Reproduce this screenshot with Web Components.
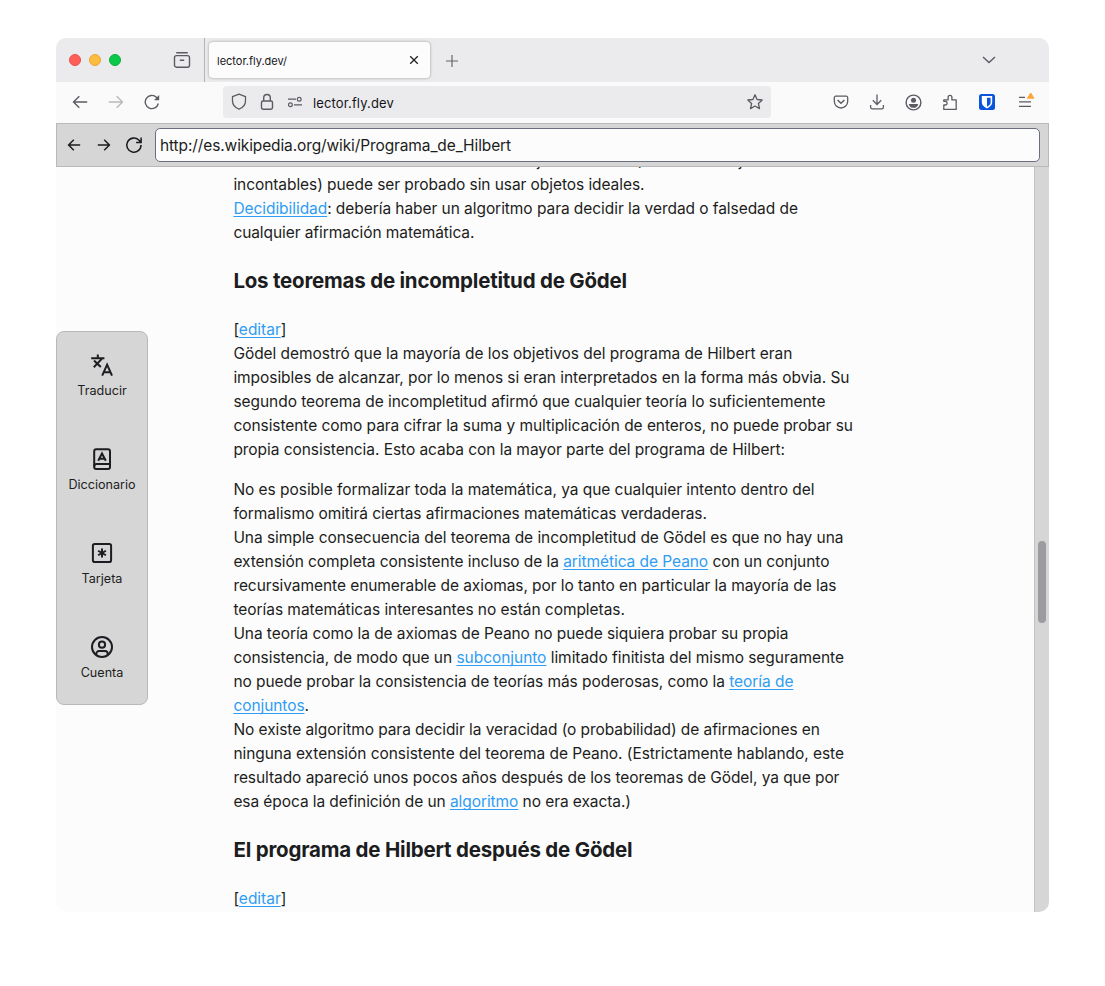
<!DOCTYPE html>
<html lang="es">
<head>
<meta charset="utf-8">
<title>lector.fly.dev</title>
<style>
html,body{margin:0;height:100%;background:#fff}
body{font-family:Inter,"Liberation Sans",sans-serif;color:#1c1d21;box-sizing:border-box;padding:38px 56px 74px;height:986px;overflow:hidden}
</style>
</head>
<body>
<browser-window>
  <tab-strip slot="tabs"></tab-strip>
  <nav-bar slot="nav"></nav-bar>
  <reader-bar slot="reader"></reader-bar>
  <reader-page slot="page">
    <side-menu slot="menu">
      <menu-item icon="translate">Traducir</menu-item>
      <menu-item icon="book">Diccionario</menu-item>
      <menu-item icon="card">Tarjeta</menu-item>
      <menu-item icon="user">Cuenta</menu-item>
    </side-menu>
    <text-line w="551">obtenido usando razonamiento sobre objetos ideales (tal como conjuntos</text-line>
    <text-line w="411">incontables) puede ser probado sin usar objetos ideales.</text-line>
    <text-line w="564.5"><wiki-link>Decidibilidad</wiki-link>: debería haber un algoritmo para decidir la verdad o falsedad de</text-line>
    <text-line w="241">cualquier afirmación matemática.</text-line>
    <section-title w="393.5">Los teoremas de incompletitud de Gödel</section-title>
    <text-line w="53">[<wiki-link>editar</wiki-link>]</text-line>
    <text-line w="559">Gödel demostró que la mayoría de los objetivos del programa de Hilbert eran</text-line>
    <text-line w="616">imposibles de alcanzar, por lo menos si eran interpretados en la forma más obvia. Su</text-line>
    <text-line w="592">segundo teorema de incompletitud afirmó que cualquier teoría lo suficientemente</text-line>
    <text-line w="619.5">consistente como para cifrar la suma y multiplicación de enteros, no puede probar su</text-line>
    <text-line w="551.5">propia consistencia. Esto acaba con la mayor parte del programa de Hilbert:</text-line>
    <text-line class="gap" w="581">No es posible formalizar toda la matemática, ya que cualquier intento dentro del</text-line>
    <text-line w="473.5">formalismo omitirá ciertas afirmaciones matemáticas verdaderas.</text-line>
    <text-line w="610">Una simple consecuencia del teorema de incompletitud de Gödel es que no hay una</text-line>
    <text-line w="596">extensión completa consistente incluso de la <wiki-link>aritmética de Peano</wiki-link> con un conjunto</text-line>
    <text-line w="603">recursivamente enumerable de axiomas, por lo tanto en particular la mayoría de las</text-line>
    <text-line w="391.5">teorías matemáticas interesantes no están completas.</text-line>
    <text-line w="555">Una teoría como la de axiomas de Peano no puede siquiera probar su propia</text-line>
    <text-line w="610.5">consistencia, de modo que un <wiki-link>subconjunto</wiki-link> limitado finitista del mismo seguramente</text-line>
    <text-line w="560">no puede probar la consistencia de teorías más poderosas, como la <wiki-link>teoría de</wiki-link></text-line>
    <text-line w="75.5"><wiki-link>conjuntos</wiki-link>.</text-line>
    <text-line w="586.5">No existe algoritmo para decidir la veracidad (o probabilidad) de afirmaciones en</text-line>
    <text-line w="610.5">ninguna extensión consistente del teorema de Peano. (Estrictamente hablando, este</text-line>
    <text-line w="606">resultado apareció unos pocos años después de los teoremas de Gödel, ya que por</text-line>
    <text-line w="397.5">esa época la definición de un <wiki-link>algoritmo</wiki-link> no era exacta.)</text-line>
    <section-title w="399">El programa de Hilbert después de Gödel</section-title>
    <text-line w="53">[<wiki-link>editar</wiki-link>]</text-line>
  </reader-page>
</browser-window>
<script>
const ICONS = {
  recent:[18,18,'<g fill="none" stroke="#5b5b66" stroke-width="1.4"><path d="M3.2 1.7H14.8"/><rect x="1.5" y="4.6" width="15" height="11.6" rx="2"/><path d="M6.8 9.3h4.4"/></g>'],
  close:[10,10,'<path d="M1.2 1.2l7.6 7.6M8.8 1.2L1.2 8.8" stroke="#222" stroke-width="1.3"/>'],
  plus:[12,12,'<path d="M6 0v12M0 6h12" stroke="#66666c" stroke-width="1.2"/>'],
  down:[14,8,'<path d="M1 1l6 5.6L13 1" fill="none" stroke="#5b5b66" stroke-width="1.4"/>'],
  back:[16,14,'<path d="M15.2 7H1.5M7.3 1.2L1.5 7l5.8 5.8" fill="none" stroke="#5b5b62" stroke-width="1.4"/>'],
  fwd:[16,14,'<path d="M.8 7h13.7M8.7 1.2L14.5 7l-5.8 5.8" fill="none" stroke="#b9b9bc" stroke-width="1.4"/>'],
  reload:[16,16,'<path d="M14.3 9.5A6.6 6.6 0 1 1 12.4 3.2L14 4.7" fill="none" stroke="#5b5b62" stroke-width="1.4"/><path d="M15.2 1v5.2H10z" fill="#5b5b62"/>'],
  shield:[16,18,'<path d="M8 1.2L14.5 3.7V8c0 4-2.6 6.6-6.5 8.2C4.1 14.6 1.5 12 1.5 8V3.7z" fill="none" stroke="#5b5b62" stroke-width="1.3" stroke-linejoin="round"/>'],
  lock:[14,18,'<g fill="none" stroke="#5b5b62" stroke-width="1.4"><rect x="1.5" y="8" width="11" height="8.2" rx="1.6"/><path d="M3.7 8V4.8a3.3 3.3 0 0 1 6.6 0V8"/></g>'],
  perms:[16,12,'<g fill="none" stroke="#5b5b62" stroke-width="1.2"><path d="M1 3.2h8M7 8.8h8"/><circle cx="12.2" cy="3.2" r="1.9"/><circle cx="3.4" cy="8.8" r="1.9"/></g>'],
  star:[18,18,'<path d="M9 1.8l2.1 4.7 5.1.5-3.8 3.5 1.1 5.1L9 13l-4.5 2.6 1.1-5.1L1.8 7l5.1-.5z" fill="none" stroke="#5b5b62" stroke-width="1.3" stroke-linejoin="round"/>'],
  pocket:[16,16,'<g fill="none" stroke="#5b5b62" stroke-width="1.3"><path d="M2.8 2.2h10.4a1.5 1.5 0 0 1 1.5 1.5v3.6a6.7 6.7 0 0 1-13.4 0V3.7a1.5 1.5 0 0 1 1.5-1.5z"/><path d="M4.6 6L8 9.2 11.4 6" stroke-width="1.5"/></g>'],
  download:[16,16,'<g fill="none" stroke="#5b5b62" stroke-width="1.3"><path d="M8 .5v9.8M3.8 6.3L8 10.5l4.2-4.2M1.6 11v2.3a1.6 1.6 0 0 0 1.6 1.6h9.6a1.6 1.6 0 0 0 1.6-1.6V11"/></g>'],
  account:[17,17,'<circle cx="8.5" cy="8.5" r="7.4" fill="none" stroke="#5b5b62" stroke-width="1.4"/><circle cx="8.5" cy="6.3" r="2.5" fill="#5b5b62"/><path d="M3.9 9.9h9.2c0 2.4-2 3.9-4.6 3.9s-4.6-1.5-4.6-3.9z" fill="#5b5b62"/>'],
  puzzle:[16,17,'<path d="M1.8 15.4V11h1.5a1.8 1.8 0 0 0 0-3.6H1.8V5.9h4.3V3.3a1.9 1.9 0 0 1 3.8 0v2.6h4.3v9.5z" fill="none" stroke="#5b5b62" stroke-width="1.3" stroke-linejoin="round"/>'],
  vault:[16,16,'<rect width="16" height="16" rx="2.5" fill="#0b55dc"/><path d="M2.8 2h10.4v6.6c0 2.6-2.2 4.4-5.2 5.9-3-1.5-5.2-3.3-5.2-5.9z" fill="#fff"/><path d="M8 3.7h3.6v4.9c0 1.7-1.3 2.8-3.6 4.1z" fill="#0b55dc"/>'],
  menu:[20,20,'<path d="M3 5.400h6M3 9.800h12M3 14.300h12" stroke="#5b5b62" stroke-width="1.3"/><path d="M14.700 1L17.900 6.200H11.500z" fill="#ffa436" stroke="#ffa436" stroke-width="1" stroke-linejoin="round"/>'],
  rback:[14,14,'<path d="M13.200 7H1.800M6.800 1.800L1.600 7l5.200 5.200" fill="none" stroke="#1c1d21" stroke-width="1.500"/>'],
  rfwd:[14,14,'<path d="M.8 7h11.400M7.200 1.800L12.400 7l-5.200 5.200" fill="none" stroke="#1c1d21" stroke-width="1.500"/>'],
  rreload:[18,18,'<path d="M16 9A7.100 7.100 0 1 1 13.800 4L15.800 6.200M16.100 1.500v5h-5" fill="none" stroke="#1c1d21" stroke-width="1.550"/>'],
  translate:[24,24,'<g fill="none" stroke="#1c1d21" stroke-width="2"><path d="M1.200 5.200H14.400M7.800 1.400V5M3.800 14.200L12 5.600M4 7.600l6.800 6.400"/><path d="M12.200 22.600L17.100 11.600 22 22.600M14 19.200h6.200"/></g>'],
  book:[24,24,'<g fill="none" stroke="#1c1d21" stroke-width="2"><rect x="4.200" y="2.200" width="15.800" height="19.800" rx="2"/><path d="M4.200 19.600C4.200 17.600 5.200 17 6.400 17H20"/><path d="M8.200 13.700L12 6.500l3.800 7.200M9.600 11.700h4.800"/></g>'],
  card:[24,24,'<g fill="none" stroke="#1c1d21" stroke-width="2"><rect x="2.900" y="2.900" width="18.200" height="18.200" rx="1.800"/><path d="M12 7.500v9M8.100 9.750l7.800 4.500M15.900 9.750l-7.800 4.500"/></g>'],
  user:[24,24,'<g fill="none" stroke="#1c1d21" stroke-width="2"><circle cx="12" cy="12" r="10"/><circle cx="12" cy="9.700" r="3.100"/><path d="M6.300 20v-1.200a2.700 2.700 0 0 1 2.700-2.700h6a2.700 2.700 0 0 1 2.700 2.700V20"/></g>']
};
function shadow(el, html){ const r = el.attachShadow({mode:'open'}); r.innerHTML = html; return r; }

customElements.define('ui-icon', class extends HTMLElement{
  connectedCallback(){
    if(this.shadowRoot) return;
    const [w,h,body] = ICONS[this.getAttribute('name')];
    shadow(this, `<style>:host{display:flex;align-items:center;justify-content:center;flex:none}svg{display:block}</style><svg width="${w}" height="${h}" viewBox="0 0 ${w} ${h}" aria-hidden="true">${body}</svg>`);
  }
});
customElements.define('browser-window', class extends HTMLElement{
  constructor(){ super(); shadow(this, `<style>
    :host{display:grid;grid-template-rows:44px 41px 44px 1fr;width:993px;height:874px;border-radius:10px;overflow:hidden;background:#fcfcfc}
    </style><slot name="tabs"></slot><slot name="nav"></slot><slot name="reader"></slot><slot name="page"></slot>`); }
});
customElements.define('tab-strip', class extends HTMLElement{
  constructor(){ super(); shadow(this, `<style>
    :host{display:flex;align-items:center;background:#ebebed;height:44px}
    .lights{display:flex;gap:8px;margin-left:13px}
    i{width:12px;height:12px;border-radius:50%;box-sizing:border-box;background:#ff5f57;border:1px solid #e9504a}
    i+i{background:#febc3f;border-color:#e5a637}i+i+i{background:#0ac84a;border-color:#08b040}
    .recent{margin-left:52px;margin-right:13px}
    .sep{width:1px;height:44px;background:#b4b4b8}
    .tab{display:flex;align-items:center;justify-content:space-between;box-sizing:border-box;width:221px;height:36px;margin:0 0 0 4px;padding:0 11px 0 8px;border-radius:4px;background:#fcfcfc;box-shadow:0 0 3px rgba(0,0,0,.35);font-size:11px;color:#15141a}
    .name{margin-top:2px}
    .plus{margin:1px 0 0 15.5px}.down{margin-left:auto;margin-right:53px}
    </style><div class="lights"><i></i><i></i><i></i></div><ui-icon class="recent" name="recent"></ui-icon><div class="sep"></div>
    <div class="tab"><text-line class="name" w="70" plain>lector.fly.dev/</text-line><ui-icon name="close"></ui-icon></div><ui-icon class="plus" name="plus"></ui-icon><ui-icon class="down" name="down"></ui-icon>`); }
});
customElements.define('nav-bar', class extends HTMLElement{
  constructor(){ super(); shadow(this, `<style>
    :host{display:flex;align-items:center;background:#fafafb;height:41px;padding:0 0 1px 6px;box-sizing:border-box}
    .b{width:36px}
    .url{display:flex;align-items:center;box-sizing:border-box;width:548px;height:32px;margin:0 52px 0 53px;padding:0 7px 0 8px;border-radius:4px;background:#ebebed;font-size:13px;color:#15141a}
    .lock{margin:0 13px 0 13px}.txt{margin:2px auto 0 10px}
    </style><ui-icon class="b" name="back"></ui-icon><ui-icon class="b" name="fwd"></ui-icon><ui-icon class="b" name="reload"></ui-icon>
    <div class="url"><ui-icon name="shield"></ui-icon><ui-icon class="lock" name="lock"></ui-icon><ui-icon name="perms"></ui-icon><text-line class="txt" w="81" plain>lector.fly.dev</text-line><ui-icon name="star"></ui-icon></div>
    <ui-icon class="b" name="pocket"></ui-icon><ui-icon class="b" name="download"></ui-icon><ui-icon class="b" name="account"></ui-icon><ui-icon class="b" style="width:38px" name="puzzle"></ui-icon><ui-icon class="b" name="vault"></ui-icon><ui-icon class="b" style="width:42px" name="menu"></ui-icon>`); }
});
customElements.define('reader-bar', class extends HTMLElement{
  constructor(){ super(); shadow(this, `<style>
    :host{display:flex;align-items:center;box-sizing:border-box;height:44px;background:#d6d6d6;border:1px solid #b9b9b9;padding:0 8px 0 2px}
    .b{width:30px}
    .in{flex:1;display:flex;align-items:center;box-sizing:border-box;height:34px;margin-left:6px;padding:2px 0 0 4px;border:1px solid #6b6e80;border-radius:5px;background:#fcfcfc;font-size:15.5px}
    </style><ui-icon class="b" name="rback"></ui-icon><ui-icon class="b" name="rfwd"></ui-icon><ui-icon class="b" name="rreload"></ui-icon>
    <div class="in"><text-line w="351" plain>http://es.wikipedia.org/wiki/Programa_de_Hilbert</text-line></div>`); }
});
customElements.define('reader-page', class extends HTMLElement{
  constructor(){ super(); shadow(this, `<style>
    :host{display:grid;grid-template-columns:92px 1fr 15px;overflow:hidden;height:745px;background:#fcfcfc}
    .menu{display:flex;align-items:flex-start;padding-top:164px}
    article{box-sizing:border-box;padding-left:85.4px;margin-top:-18px;height:763px;overflow:hidden;font-size:15.5px}
    ::slotted(.gap){margin-top:16px}
    .bar{background:#d6d6d6;border-left:1px solid #c2c2c2;padding:374px 3px 0}
    .thumb{height:82px;width:8px;border-radius:4px;background:#9b9ca1}
    </style><div class="menu"><slot name="menu"></slot></div><article><slot></slot></article><div class="bar"><div class="thumb"></div></div>`); }
});
customElements.define('side-menu', class extends HTMLElement{
  constructor(){ super(); shadow(this, `<style>
    :host{display:flex;flex-direction:column;gap:46px;box-sizing:border-box;width:92px;height:374px;padding-top:21px;background:#d6d6d6;border:1px solid #b9b9b9;border-radius:8px}
    </style><slot></slot>`); }
});
customElements.define('menu-item', class extends HTMLElement{
  constructor(){ super(); shadow(this, `<style>
    :host{display:flex;flex-direction:column;align-items:center;gap:4px;height:48px;font-size:12.6px;line-height:20px}
    </style><ui-icon name="${this.getAttribute('icon')}"></ui-icon><span><slot></slot></span>`); }
});
customElements.define('wiki-link', class extends HTMLElement{
  constructor(){ super(); shadow(this, `<style>
    :host{display:inline;color:#2f9df4}
    span{text-decoration:underline;text-decoration-thickness:1px;text-underline-offset:2px;text-decoration-skip-ink:none}
    </style><span><slot></slot></span>`); }
});
/* Tracks the letters so that a line sets to the measure given in its w attribute. */
function track(el){
  const span = el.shadowRoot.querySelector('span');
  const w = +el.getAttribute('w'), n = el.textContent.trim().length;
  span.style.letterSpacing = ((w - span.getBoundingClientRect().width) / n) + 'px';
}
customElements.define('section-title', class extends HTMLElement{
  constructor(){ super(); shadow(this, `<style>
    :host{display:flex;align-items:center;box-sizing:border-box;height:73px;padding-bottom:2px;font-size:20.5px;font-weight:700;white-space:nowrap}
    </style><span><slot></slot></span>`); }
  connectedCallback(){ track(this); }
});
customElements.define('text-line', class extends HTMLElement{
  constructor(){ super(); shadow(this, `<style>
    :host{display:block;height:24px;line-height:24px;white-space:nowrap}
    :host([plain]){width:max-content}
    </style><span><slot></slot></span>`); }
  connectedCallback(){ track(this); }
});
</script>
</body>
</html>
